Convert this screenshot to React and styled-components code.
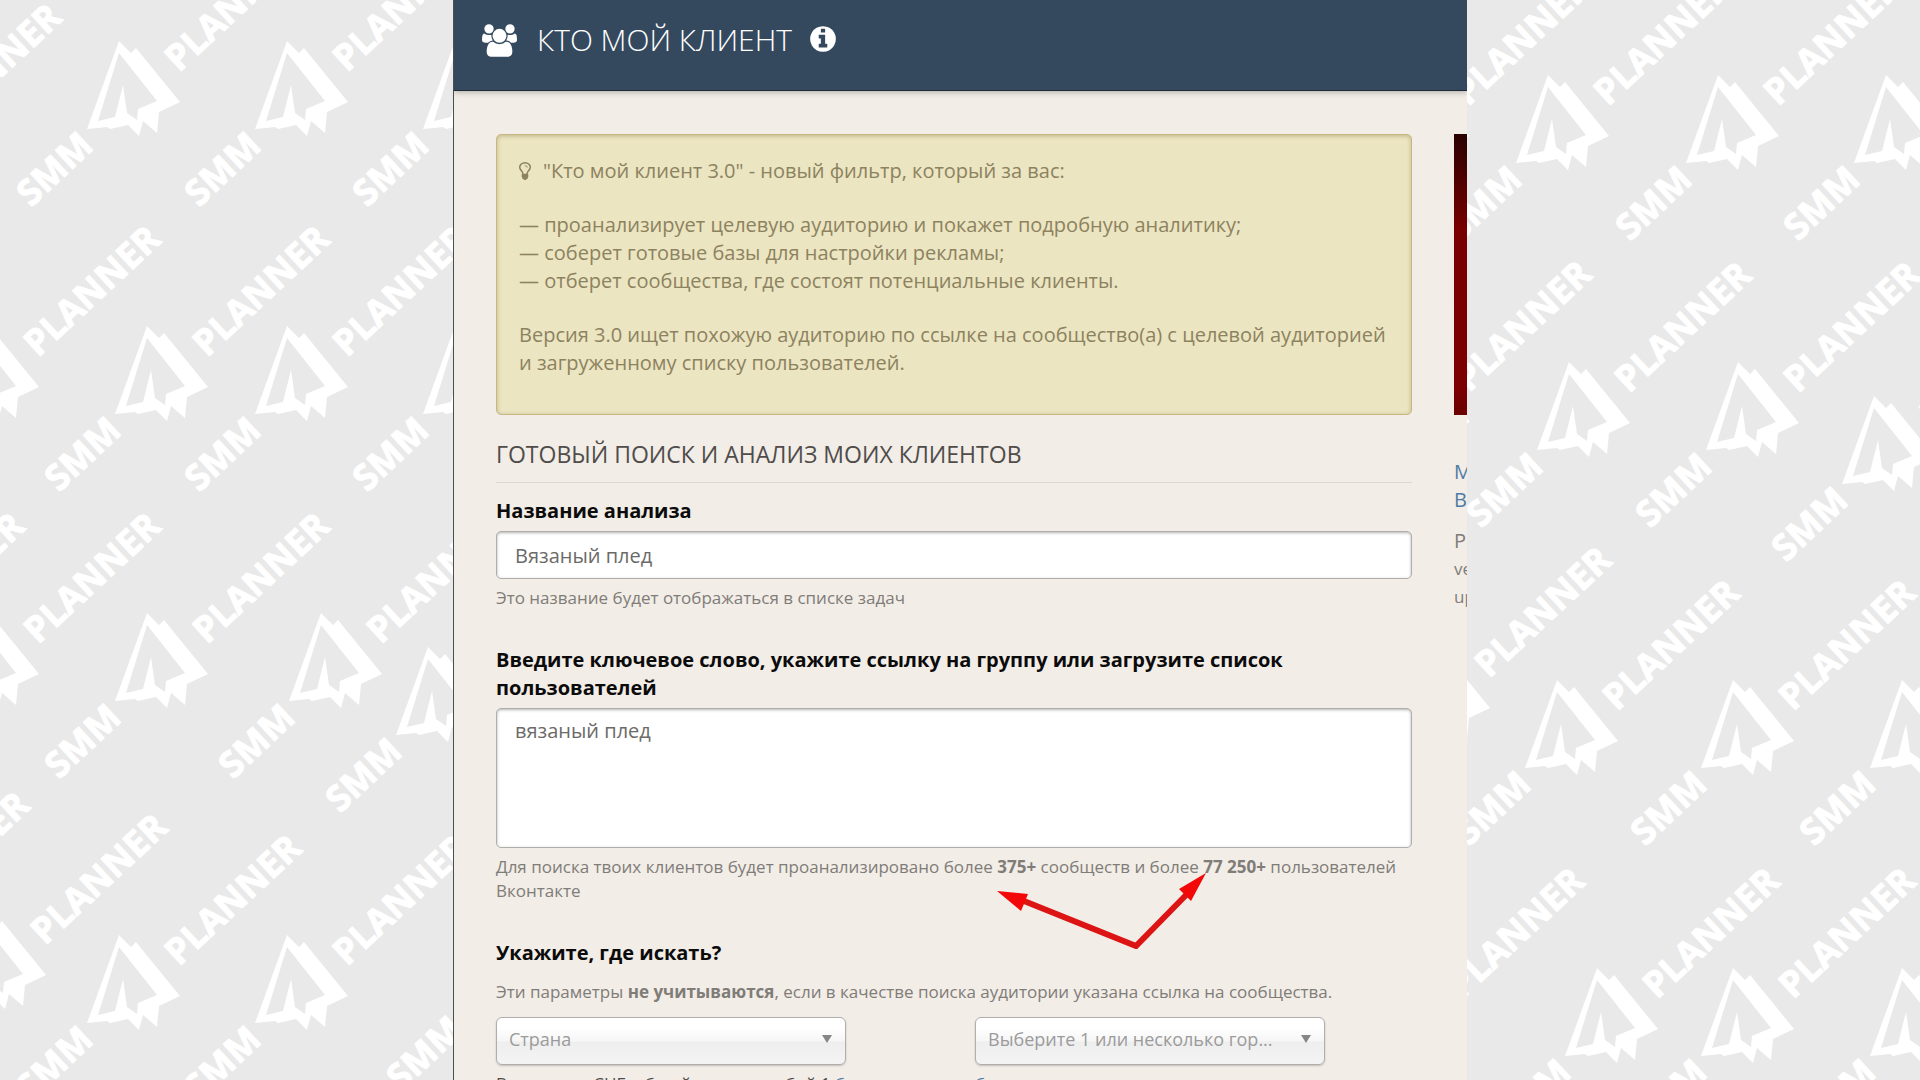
import React, { useState } from "react";
import styled, { ThemeProvider, createGlobalStyle } from "styled-components";

const theme = {
  color: {
    page: "#e9e9e9",
    panel: "#f2ede7",
    header: "#34495e",
    headerLine: "#1f2a36",
    alert: "#ebe5c1",
    alertLine: "#c6b783",
    alertText: "#8d8260",
    text: "#4f4c4a",
    strong: "#0c0b0b",
    muted: "#807c78",
    line: "#dcd7d2",
    control: "#b0aeab",
    link: "#4f7ba4",
    arrow: "#dd1414"
  },
  fontSize: { sm: "17px", md: "18px", base: "20px", lg: "23px", xl: "30px" },
  lineHeight: { sm: "24px", base: "28px" },
  radius: "5px"
};

// top point of every watermark
const marks = [
  [-121, 104], [119, 41], [287, 41], [455, 41],
  [-22, 326], [147, 326], [287, 326], [455, 326],
  [-158, 613], [-22, 613], [147, 613], [321, 613], [428, 647],
  [-153, 892], [-15, 914], [119, 935], [287, 935], [489, 925],
  [1408, 75], [1548, 75], [1718, 75], [1886, 75],
  [1409, 361], [1569, 362], [1738, 362], [1874, 396],
  [1429, 647], [1557, 680], [1733, 680], [1902, 680],
  [1402, 968], [1597, 968], [1733, 968], [1902, 968]
];

function Watermarks() {
  return (
    <StWatermarks viewBox="0 0 1920 1080" preserveAspectRatio="xMidYMin slice" aria-hidden="true">
      {marks.map(([x, y]) => (
        <g key={`${x}-${y}`} transform={`translate(${x} ${y})`}>
          <path
            fillRule="evenodd"
            d="M0 0 L12 12 L17 7 L61 61 L40 71 L38 92 L24 80 L20 95 L9 84 L-9 88 L-12 86 L-32 88Z
               M0 12 L38 60 L19 68 L18 79 L8 72 L4 44 L-4 76 L-21 80Z"
          />
          <text transform="translate(-88 167) rotate(-43)">SMM</text>
          <text transform="translate(60 32) rotate(-43)">PLANNER</text>
        </g>
      ))}
    </StWatermarks>
  );
}

function UsersIcon() {
  return (
    <svg width="35" height="33" viewBox="0 0 1920 1792" fill="currentColor" aria-hidden="true">
      <path d="M593 896q-162 5-265 128h-134q-82 0-138-40.5t-56-118.5q0-353 124-353 6 0 43.5 21t97.5 42.5 119 21.5q67 0 133-23-5 37-5 66 0 139 81 256zm1071 637q0 120-73 189.5t-194 69.5h-874q-121 0-194-69.5t-73-189.5q0-53 3.5-103.5t14-109 26.5-108.5 43-97.5 62-81 85.5-53.5 111.5-20q10 0 43 21.5t73 48 107 48 135 21.5 135-21.5 107-48 73-48 43-21.5q61 0 111.5 20t85.5 53.5 62 81 43 97.5 26.5 108.5 14 109 3.5 103.5zm-1024-1277q0 106-75 181t-181 75-181-75-75-181 75-181 181-75 181 75 75 181zm704 384q0 159-112.5 271.5t-271.5 112.5-271.5-112.5-112.5-271.5 112.5-271.5 271.5-112.5 271.5 112.5 112.5 271.5zm576 225q0 78-56 118.5t-138 40.5h-134q-103-123-265-128 81-117 81-256 0-29-5-66 66 23 133 23 59 0 119-21.5t97.5-42.5 43.5-21q124 0 124 353zm-128-609q0 106-75 181t-181 75-181-75-75-181 75-181 181-75 181 75 75 181z" />
    </svg>
  );
}

function InfoIcon() {
  return (
    <svg width="30" height="30" viewBox="0 0 1792 1792" fill="currentColor" aria-hidden="true">
      <path d="M1152 1376v-160q0-14-9-23t-23-9h-96v-512q0-14-9-23t-23-9h-320q-14 0-23 9t-9 23v160q0 14 9 23t23 9h96v320h-96q-14 0-23 9t-9 23v160q0 14 9 23t23 9h448q14 0 23-9t9-23zm-128-896v-160q0-14-9-23t-23-9h-192q-14 0-23 9t-9 23v160q0 14 9 23t23 9h192q14 0 23-9t9-23zm640 416q0 209-103 385.5t-279.5 279.5-385.5 103-385.5-103-279.5-279.5-103-385.5 103-385.5 279.5-279.5 385.5-103 385.5 103 279.5 279.5 103 385.5z" />
    </svg>
  );
}

function BulbIcon() {
  return (
    <svg width="12" height="18" viewBox="384 128 1024 1536" fill="currentColor" aria-hidden="true">
      <path d="M1120 576q0 13-9.5 22.5t-22.5 9.5-22.5-9.5-9.5-22.5q0-46-54-71t-106-25q-13 0-22.5-9.5t-9.5-22.5 9.5-22.5 22.5-9.5q50 0 99.5 16t87 54 37.5 90zm160 0q0-72-34.5-134t-90-101.5-123-62-136.5-22.5-136.5 22.5-123 62-90 101.5-34.5 134q0 101 68 180 10 11 30.5 33t30.5 33q128 153 141 298h228q13-145 141-298 10-11 30.5-33t30.5-33q68-79 68-180zm128 0q0 155-103 268-45 49-74.5 87t-59.5 95.5-34 107.5q47 28 47 82 0 37-25 64 25 27 25 64 0 52-45 81 13 23 13 47 0 46-31.5 71t-77.5 25q-20 44-60 70t-87 26-87-26-60-70q-46 0-77.5-25t-31.5-71q0-24 13-47-45-29-45-81 0-37 25-64-25-27-25-64 0-54 47-82-4-50-34-107.5t-59.5-95.5-74.5-87q-103-113-103-268 0-99 44.5-184.5t117-142 164-89 186.5-32.5 186.5 32.5 164 89 117 142 44.5 184.5z" />
    </svg>
  );
}

function Arrows() {
  return (
    <StArrows width="212" height="76" viewBox="0 0 212 76" aria-hidden="true">
      <path className="line" d="M28 28 L140 73 L195 17" />
      <path className="head" d="M1 18 L32 21 L25 38Z" />
      <path className="head" d="M210 0 L195 28 L183 16Z" />
    </StArrows>
  );
}

function App() {
  const [name, setName] = useState("Вязаный плед");
  const [query, setQuery] = useState("вязаный плед");

  return (
    <ThemeProvider theme={theme}>
      <GlobalStyle />
      <StPage>
        <Watermarks />
        <StPanel>
          <StHeader>
            <UsersIcon />
            <h1>КТО МОЙ КЛИЕНТ</h1>
            <StInfoButton type="button" aria-label="Информация">
              <InfoIcon />
            </StInfoButton>
          </StHeader>

          <StContent>
            <StForm>
              <StAlert>
                <p>
                  <BulbIcon />
                  "Кто мой клиент 3.0" - новый фильтр, который за вас:
                </p>
                <p>
                  — проанализирует целевую аудиторию и покажет подробную аналитику;
                  <br />— соберет готовые базы для настройки рекламы;
                  <br />— отберет сообщества, где состоят потенциальные клиенты.
                </p>
                <p>
                  Версия 3.0 ищет похожую аудиторию по ссылке на сообщество(а) с целевой аудиторией и загруженному
                  списку пользователей.
                </p>
              </StAlert>

              <StTitle>ГОТОВЫЙ ПОИСК И АНАЛИЗ МОИХ КЛИЕНТОВ</StTitle>

              <StField>
                <label htmlFor="name">Название анализа</label>
                <StInput id="name" value={name} onChange={(e) => setName(e.target.value)} />
                <StHelp>Это название будет отображаться в списке задач</StHelp>
              </StField>

              <StField>
                <label htmlFor="query">
                  Введите ключевое слово, укажите ссылку на группу или загрузите список пользователей
                </label>
                <StTextarea id="query" value={query} onChange={(e) => setQuery(e.target.value)} />
                <StHelp>
                  Для поиска твоих клиентов будет проанализировано более <b>375+</b> сообществ и более{" "}
                  <b>77 250+</b> пользователей Вконтакте
                  <Arrows />
                </StHelp>
              </StField>

              <StPlaces>
                <legend>Укажите, где искать?</legend>
                <StHelp>
                  Эти параметры <b>не учитываются</b>, если в качестве поиска аудитории указана ссылка на сообщества.
                </StHelp>
                <StColumns>
                  <div>
                    <StSelectWrap>
                      <select aria-label="Страна">
                        <option>Страна</option>
                      </select>
                    </StSelectWrap>
                    <StNote>
                      Все страны СНГ, общий список, любой 1 <a href="#country">б</a>
                    </StNote>
                  </div>
                  <div>
                    <StSelectWrap>
                      <select aria-label="Город">
                        <option>Выберите 1 или несколько гор...</option>
                      </select>
                    </StSelectWrap>
                    <StNote>
                      <a href="#city">б</a>
                    </StNote>
                  </div>
                </StColumns>
              </StPlaces>
            </StForm>

            <StAside>
              <StBanner />
              <a href="#news">
                М<br />В
              </a>
              <p>P</p>
              <small>
                ve
                <br />
                up
              </small>
            </StAside>
          </StContent>
        </StPanel>
      </StPage>
    </ThemeProvider>
  );
}

const GlobalStyle = createGlobalStyle`
  * {
    box-sizing: border-box;
  }

  body {
    margin: 0;
    background-color: #e9e9e9;
    font-family: "Open Sans", "Noto Sans", sans-serif;
  }

  h1, h2, p, fieldset, legend {
    margin: 0;
    padding: 0;
    border: 0;
  }

  input, textarea, select, button {
    font-family: inherit;
  }

  a {
    text-decoration: none;
  }
`;

const StPage = styled.div`
  position: relative;
  display: flex;
  justify-content: center;
  height: 100vh;
  overflow: hidden;
  background-color: ${({ theme }) => theme.color.page};
`;

const StWatermarks = styled.svg`
  position: absolute;
  top: 0;
  left: 0;
  width: 100%;
  height: 100%;
  fill: #ffffff;
  font-size: 36px;
  font-weight: 700;

  text {
    stroke: #ffffff;
    stroke-width: 1px;
    stroke-linejoin: round;
  }
`;

const StPanel = styled.main`
  position: relative;
  width: 100%;
  max-width: 1014px;
  min-height: 100%;
  overflow: hidden;
  border-left: 1px solid #4b4d50;
  background-color: ${({ theme }) => theme.color.panel};
`;

const StHeader = styled.header`
  display: flex;
  align-items: flex-start;
  height: 91px;
  padding: 24px 28px;
  color: #ffffff;
  background-color: ${({ theme }) => theme.color.header};
  border-bottom: 1px solid ${({ theme }) => theme.color.headerLine};
  box-shadow: 0 1px 6px rgba(0, 0, 0, 0.3);

  h1 {
    margin: 0 16px 0 20px;
    font-size: ${({ theme }) => theme.fontSize.xl};
    font-weight: 300;
    line-height: 32px;
  }
`;

const StInfoButton = styled.button`
  display: flex;
  padding: 0;
  border: 0;
  color: inherit;
  background: none;
  cursor: pointer;
`;

const StContent = styled.div`
  display: grid;
  grid-template-columns: minmax(0, 1fr) 13px;
  gap: 42px;
  padding: 43px 0 0 42px;
`;

const StForm = styled.form`
  display: flex;
  flex-direction: column;
`;

const StAlert = styled.div`
  display: flex;
  flex-direction: column;
  gap: 26px;
  padding: 22px 22px 37px;
  border: 1px solid ${({ theme }) => theme.color.alertLine};
  border-radius: ${({ theme }) => theme.radius};
  color: ${({ theme }) => theme.color.alertText};
  background-color: ${({ theme }) => theme.color.alert};
  box-shadow: inset 0 1px 4px rgba(110, 90, 30, 0.35);
  font-size: ${({ theme }) => theme.fontSize.base};
  line-height: ${({ theme }) => theme.lineHeight.base};

  svg {
    margin-right: 12px;
    vertical-align: -2px;
  }
`;

const StTitle = styled.h2`
  margin-bottom: 14px;
  padding: 24px 0 13px;
  border-bottom: 1px solid ${({ theme }) => theme.color.line};
  color: ${({ theme }) => theme.color.text};
  font-size: ${({ theme }) => theme.fontSize.lg};
  font-weight: 400;
  line-height: 30px;
`;

const StField = styled.div`
  margin-bottom: 36px;

  label {
    display: block;
    margin-bottom: 6px;
    color: ${({ theme }) => theme.color.strong};
    font-size: ${({ theme }) => theme.fontSize.base};
    font-weight: 700;
    line-height: ${({ theme }) => theme.lineHeight.base};
  }
`;

const StInput = styled.input`
  display: block;
  width: 100%;
  height: 48px;
  padding: 8px 18px;
  border: 1px solid ${({ theme }) => theme.color.control};
  border-radius: ${({ theme }) => theme.radius};
  outline: none;
  color: #6c6a68;
  background-color: #ffffff;
  box-shadow: inset 0 1px 3px rgba(0, 0, 0, 0.3);
  font-size: ${({ theme }) => theme.fontSize.base};
  line-height: ${({ theme }) => theme.lineHeight.base};
`;

const StTextarea = styled(StInput).attrs({ as: "textarea" })`
  height: 140px;
  resize: none;
`;

const StHelp = styled.p`
  position: relative;
  margin-top: 7px;
  color: ${({ theme }) => theme.color.muted};
  font-size: ${({ theme }) => theme.fontSize.sm};
  line-height: ${({ theme }) => theme.lineHeight.sm};
`;

const StArrows = styled.svg`
  position: absolute;
  top: 18px;
  left: 500px;

  .line {
    fill: none;
    stroke: ${({ theme }) => theme.color.arrow};
    stroke-width: 6px;
  }

  .head {
    fill: #f20808;
  }
`;

const StPlaces = styled.fieldset`
  legend {
    margin-bottom: 13px;
    color: ${({ theme }) => theme.color.strong};
    font-size: ${({ theme }) => theme.fontSize.base};
    font-weight: 700;
    line-height: ${({ theme }) => theme.lineHeight.base};
  }

  ${StHelp} {
    margin-top: 0;
  }
`;

const StColumns = styled.div`
  display: grid;
  grid-template-columns: 1fr 1fr;
  gap: 42px;
  margin-top: 13px;
`;

const StSelectWrap = styled.div`
  position: relative;
  width: 80%;

  select {
    display: block;
    width: 100%;
    height: 48px;
    padding: 0 12px 4px;
    appearance: none;
    border: 1px solid ${({ theme }) => theme.color.control};
    border-radius: 6px;
    outline: none;
    color: #9b9b9b;
    background: linear-gradient(#ffffff 20%, #f6f6f6 50%, #eeeeee 52%, #f4f4f4 100%);
    box-shadow: 0 1px 2px rgba(0, 0, 0, 0.2);
    font-size: ${({ theme }) => theme.fontSize.md};
  }

  &::after {
    content: "";
    position: absolute;
    top: 18px;
    right: 14px;
    border: 5px solid transparent;
    border-top: 8px solid #868686;
    border-bottom: 0;
    pointer-events: none;
  }
`;

const StNote = styled.p`
  margin-top: 7px;
  color: ${({ theme }) => theme.color.text};
  font-size: ${({ theme }) => theme.fontSize.sm};
  line-height: ${({ theme }) => theme.lineHeight.sm};

  a {
    color: ${({ theme }) => theme.color.link};
  }
`;

const StAside = styled.aside`
  overflow: hidden;
  color: ${({ theme }) => theme.color.muted};
  font-size: ${({ theme }) => theme.fontSize.base};
  line-height: ${({ theme }) => theme.lineHeight.base};
  white-space: nowrap;

  a {
    display: block;
    margin: 43px 0 13px;
    color: ${({ theme }) => theme.color.link};
  }

  small {
    display: block;
    font-size: ${({ theme }) => theme.fontSize.sm};
  }
`;

const StBanner = styled.div`
  height: 281px;
  background: linear-gradient(#2a0000, #780000 34%, #7d0000 90%, #6a0000);
`;

export default App;
